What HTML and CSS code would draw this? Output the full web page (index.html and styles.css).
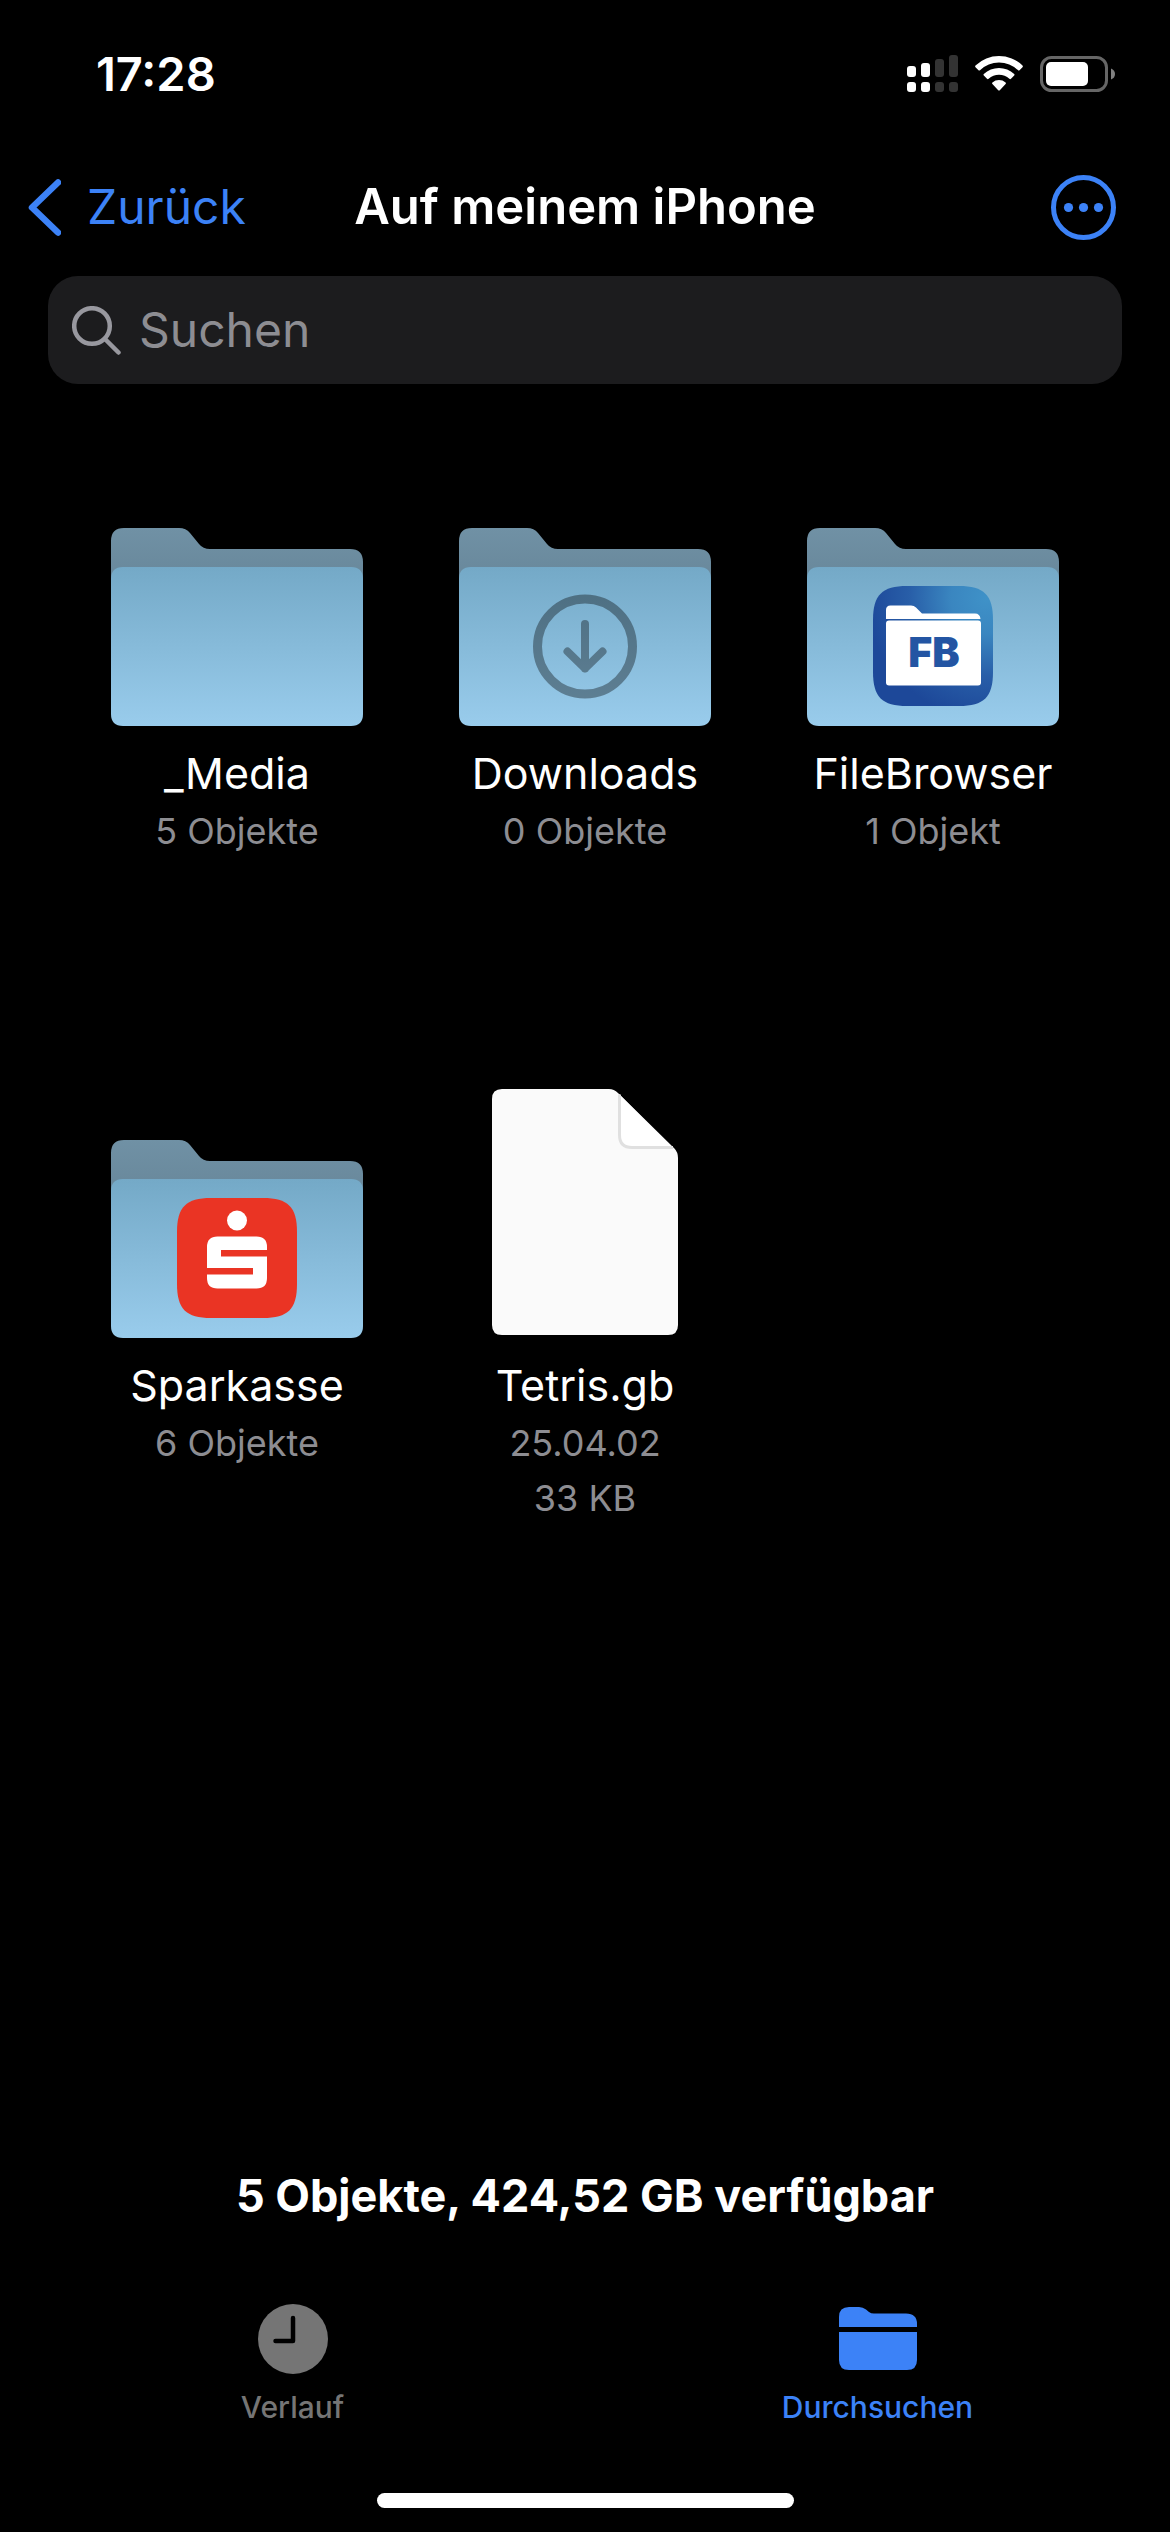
FILE: index.html
```html
<!DOCTYPE html>
<html lang="de">
<head>
<meta charset="utf-8">
<meta name="viewport" content="width=device-width, initial-scale=1">
<title>Auf meinem iPhone</title>
<link rel="stylesheet" href="styles.css">
</head>
<body>
<svg class="defs" width="0" height="0" aria-hidden="true">
  <defs>
    <linearGradient id="folder-front" x1="0" y1="0" x2="0" y2="1">
      <stop offset="0" stop-color="#74a9c7"/>
      <stop offset="1" stop-color="#99ccec"/>
    </linearGradient>
    <linearGradient id="folder-back" x1="0" y1="0" x2="0" y2="1">
      <stop offset="0" stop-color="#7091a5"/>
      <stop offset="1" stop-color="#678699"/>
    </linearGradient>
    <radialGradient id="fb-blue" cx="0.95" cy="0.1" r="1">
      <stop offset="0" stop-color="#3f92c8"/>
      <stop offset="0.3" stop-color="#3a86c0"/>
      <stop offset="0.65" stop-color="#285ea8"/>
      <stop offset="1" stop-color="#1d4899"/>
    </radialGradient>
    <symbol id="folder" viewBox="0 0 252 198">
      <path fill="url(#folder-back)" d="M0 60V13Q0 0 13 0H68Q75 0 79 5L88 16Q92 21 99 21H239Q252 21 252 34V60Z"/>
      <path fill="url(#folder-front)" d="M0 51Q0 39 12 39H240Q252 39 252 51V186Q252 198 240 198H12Q0 198 0 186Z"/>
    </symbol>
  </defs>
</svg>

<div class="screen">
  <header class="status">
    <time class="clock">17:28</time>
    <div class="indicators">
      <svg class="signal" viewBox="0 0 51 38" aria-label="Mobilfunk">
        <g fill="#fff">
          <rect x="0" y="11" width="9" height="11" rx="3"/>
          <rect x="14" y="8" width="9" height="14" rx="3"/>
          <rect x="0" y="27" width="9" height="10" rx="3"/>
          <rect x="14" y="27" width="9" height="10" rx="3"/>
        </g>
        <g fill="#333">
          <rect x="28" y="4" width="9" height="18" rx="3"/>
          <rect x="42" y="0" width="9" height="22" rx="3"/>
          <rect x="28" y="27" width="9" height="10" rx="3"/>
          <rect x="42" y="27" width="9" height="10" rx="3"/>
        </g>
      </svg>
      <svg class="wifi" viewBox="0 0 48 38" aria-label="WLAN">
        <path fill="#fff" d="M0.500 10.500A34 34 0 0 1 47.500 10.500Q48.300 11.300 47.500 12.200L44.500 15.200Q43.800 15.900 43 15.200A27.500 27.500 0 0 0 5 15.200Q4.200 15.900 3.500 15.200L0.500 12.200Q-0.300 11.300 0.500 10.500Z"/>
        <path fill="#fff" d="M8.800 19A22 22 0 0 1 39.200 19Q40 19.800 39.200 20.600L36 23.800Q35.200 24.500 34.400 23.800A15.500 15.500 0 0 0 13.600 23.800Q12.800 24.500 12 23.800L8.800 20.600Q8 19.800 8.800 19Z"/>
        <path fill="#fff" d="M17.400 27.400A10.500 10.500 0 0 1 30.600 27.400Q31.400 28.200 30.600 29L24.800 35.200Q24 36 23.200 35.200L17.400 29Q16.600 28.200 17.400 27.400Z"/>
      </svg>
      <svg class="battery" viewBox="0 0 75 36" aria-label="Batterie">
        <rect x="1.500" y="1.500" width="65" height="33" rx="10" fill="none" stroke="#666" stroke-width="3"/>
        <rect x="6" y="6" width="42" height="24" rx="5" fill="#fff"/>
        <path fill="#808080" d="M71 12.500Q75 14 75 18T71 23.500Z"/>
      </svg>
    </div>
  </header>

  <nav class="navbar">
    <a class="back" href="#">
      <svg class="chevron" viewBox="0 0 33 57" aria-hidden="true"><path d="M30 3.500L4 28.500L30 53.500" fill="none" stroke="currentColor" stroke-width="6.500" stroke-linecap="round" stroke-linejoin="round"/></svg>
      <span>Zurück</span>
    </a>
    <h1 class="title">Auf meinem iPhone</h1>
    <button class="more" type="button" aria-label="Mehr">
      <svg viewBox="0 0 65 65" aria-hidden="true">
        <circle cx="32.500" cy="32.500" r="30" fill="none" stroke="currentColor" stroke-width="5"/>
        <g fill="currentColor"><circle cx="17.500" cy="32.500" r="4.600"/><circle cx="32.500" cy="32.500" r="4.600"/><circle cx="47.500" cy="32.500" r="4.600"/></g>
      </svg>
    </button>
  </nav>

  <label class="search">
    <svg viewBox="0 0 49 49" aria-hidden="true"><g fill="none" stroke="currentColor" stroke-width="4.500" stroke-linecap="round"><circle cx="20" cy="20" r="17.800"/><path d="M33 33L46.500 46.500"/></g></svg>
    <input type="search" placeholder="Suchen" aria-label="Suchen">
  </label>

  <main class="files">
    <a class="item" href="#">
      <span class="thumb"><svg class="folder" viewBox="0 0 252 198" aria-hidden="true"><use href="#folder"/></svg></span>
      <span class="name">_Media</span>
      <span class="meta">5 Objekte</span>
    </a>
    <a class="item" href="#">
      <span class="thumb"><svg class="folder" viewBox="0 0 252 198" aria-hidden="true">
        <use href="#folder"/>
        <g fill="none" stroke="#000" stroke-opacity="0.360" stroke-linecap="round" stroke-linejoin="round">
          <circle cx="126" cy="118.500" r="47.500" stroke-width="9"/>
          <path d="M126 96V140.500M108.500 123.500L126 140.500L143.500 123.500" stroke-width="8"/>
        </g>
      </svg></span>
      <span class="name">Downloads</span>
      <span class="meta">0 Objekte</span>
    </a>
    <a class="item" href="#">
      <span class="thumb"><svg class="folder" viewBox="0 0 252 198" aria-hidden="true">
        <use href="#folder"/>
        <path fill="url(#fb-blue)" d="M66 92C66 67 75 58 100 58H152C177 58 186 67 186 92V144C186 169 177 178 152 178H100C75 178 66 169 66 144Z"/>
        <path fill="#fff" d="M79 91V82Q79 77.500 83.500 77.500H104Q107 77.500 109 79.500L115 85.500H168Q173 85.500 173.500 91Z"/>
        <rect x="79" y="92.500" width="95" height="65" rx="3" fill="#fff"/>
        <text class="fb" x="127" y="139" text-anchor="middle">FB</text>
      </svg></span>
      <span class="name">FileBrowser</span>
      <span class="meta">1 Objekt</span>
    </a>
    <a class="item" href="#">
      <span class="thumb"><svg class="folder" viewBox="0 0 252 198" aria-hidden="true">
        <use href="#folder"/>
        <path fill="#ea3424" d="M66 92C66 67 75 58 100 58H152C177 58 186 67 186 92V144C186 169 177 178 152 178H100C75 178 66 169 66 144Z"/>
        <circle cx="126" cy="80.500" r="10" fill="#fff"/>
        <path fill="#fff" d="M96 128V107Q96 96.500 106.500 96.500H145.500Q156 96.500 156 107V110H110V116.500H156V138Q156 148.500 145.500 148.500H106.500Q96 148.500 96 138V134.500H142V128Z"/>
      </svg></span>
      <span class="name">Sparkasse</span>
      <span class="meta">6 Objekte</span>
    </a>
    <a class="item" href="#">
      <span class="thumb"><svg class="document" viewBox="0 0 186 249" aria-hidden="true">
        <path fill="#fafafa" d="M0 10Q0 0 10 0H117Q122 0 126 4L182 59Q186 63 186 69V236Q186 246 176 246H10Q0 246 0 236Z"/>
        <path fill="#fff" d="M127 5L180 58.500H140Q127.500 58.500 127.500 46Z"/>
        <path fill="none" stroke="#e0e0e0" stroke-width="3" d="M127.500 5.500V46Q127.500 58.500 140 58.500H181"/>
      </svg></span>
      <span class="name">Tetris.gb</span>
      <span class="meta">25.04.02</span>
      <span class="meta">33 KB</span>
    </a>
  </main>

  <p class="summary">5 Objekte, 424,52 GB verfügbar</p>

  <nav class="tabs">
    <a class="tab" href="#">
      <svg viewBox="0 0 78 70" aria-hidden="true"><circle cx="39" cy="35" r="35" fill="currentColor"/><path d="M39 14V37H21.500" fill="none" stroke="#000" stroke-width="4.500" stroke-linecap="round" stroke-linejoin="round"/></svg>
      <span>Verlauf</span>
    </a>
    <a class="tab active" href="#" aria-current="page">
      <svg viewBox="0 0 78 70" aria-hidden="true"><path fill="currentColor" d="M0 23V13Q0 3 10 3H20Q24 3 27 5.500L30 8Q32 9.500 35 9.500H67Q78 9.500 78 20V23ZM0 28H78V56Q78 66 68 66H10Q0 66 0 56Z"/></svg>
      <span>Durchsuchen</span>
    </a>
  </nav>
  <div class="home"></div>
</div>
</body>
</html>
```
FILE: styles.css
```css
* {
  box-sizing: border-box;
}

body {
  margin: 0;
  background: #000;
  color: #fff;
  font-family: Inter, "Liberation Sans", sans-serif;
}

a {
  color: inherit;
  text-decoration: none;
}

svg {
  display: block;
}

.defs {
  position: absolute;
}

.screen {
  display: flex;
  flex-direction: column;
  min-height: 100vh;
}

.status {
  display: flex;
  align-items: center;
  justify-content: space-between;
  height: 148px;
  padding: 0 55px 0 96px;
}

.clock {
  font-size: 47px;
  font-weight: 600;
  line-height: 60px;
}

.indicators {
  display: flex;
  align-items: center;
  gap: 17px;
}

.signal {
  width: 51px;
  height: 38px;
}

.wifi {
  width: 48px;
  height: 38px;
}

.battery {
  width: 75px;
  height: 36px;
}

.navbar {
  display: grid;
  grid-template-columns: 1fr auto 1fr;
  align-items: center;
  height: 118px;
  padding: 0 28px;
}

.back {
  display: flex;
  align-items: center;
  gap: 26px;
  color: #3c82f7;
  font-size: 48px;
  line-height: 60px;
}

.chevron {
  width: 33px;
  height: 57px;
}

.title {
  margin: 0;
  font-size: 49px;
  font-weight: 600;
  line-height: 60px;
}

.more {
  justify-self: end;
  width: 65px;
  height: 65px;
  margin-right: 26px;
  padding: 0;
  border: 0;
  background: none;
  color: #3c82f7;
}

.search {
  display: flex;
  align-items: center;
  gap: 18px;
  height: 108px;
  margin: 10px 48px 0;
  padding: 0 24px;
  border-radius: 30px;
  background: #1c1c1e;
  color: #98989f;
}

.search svg {
  flex: none;
  width: 49px;
  height: 49px;
}

.search input {
  flex: 1;
  min-width: 0;
  padding: 0;
  border: 0;
  outline: 0;
  background: none;
  color: #fff;
  font: inherit;
  font-size: 48px;
  line-height: 60px;
  appearance: none;
}

.search input::placeholder {
  color: #8d8d92;
  opacity: 1;
}

.files {
  display: grid;
  grid-template-columns: repeat(3, 1fr);
  grid-auto-rows: 612px;
  padding: 90px 63px 0;
}

.item {
  display: flex;
  flex-direction: column;
  align-items: center;
}

.thumb {
  display: flex;
  align-items: flex-end;
  height: 252px;
  margin-bottom: 16px;
}

.folder {
  width: 252px;
  height: 198px;
}

.document {
  width: 186px;
  height: 249px;
}

.fb {
  fill: #2355a3;
  font-size: 41px;
  font-weight: 900;
}

.name {
  font-size: 43px;
  line-height: 62px;
}

.meta {
  color: #8d8d92;
  font-size: 36px;
  line-height: 55px;
}

.summary {
  margin: auto 0 78px;
  font-size: 45px;
  font-weight: 700;
  line-height: 60px;
  text-align: center;
}

.tabs {
  display: grid;
  grid-template-columns: 1fr 1fr;
}

.tab {
  display: flex;
  flex-direction: column;
  align-items: center;
  gap: 15px;
  color: #757575;
  font-size: 30px;
  font-weight: 500;
  line-height: 36px;
}

.tab svg {
  width: 78px;
  height: 70px;
}

.tab.active {
  color: #3c82f7;
}

.home {
  width: 417px;
  max-width: 60%;
  height: 15px;
  margin: 68px auto 24px;
  border-radius: 8px;
  background: #fff;
}
```
